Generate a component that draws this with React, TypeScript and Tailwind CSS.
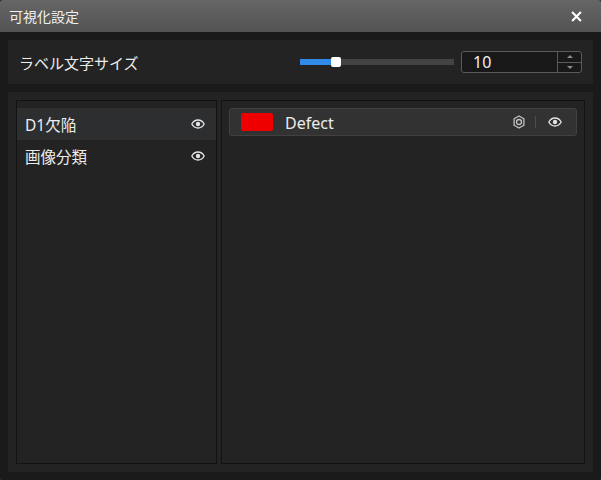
const font = { fontFamily: '"Noto Sans", "Noto Sans CJK JP", sans-serif' };

function EyeIcon({ className }: { className?: string }) {
    return (
        <svg viewBox="0 0 14 10" className={className} fill="none">
            <path
                d="M0.8 5C2.2 2.4 4.4 1 7 1s4.8 1.4 6.2 4C11.800 7.600 9.600 9 7 9S2.200 7.600 0.800 5Z"
                stroke="currentColor"
                strokeWidth="1.3"
                strokeLinejoin="round"
            />
            <circle cx="7" cy="5" r="2.200" fill="currentColor" />
        </svg>
    );
}

function HexIcon({ className }: { className?: string }) {
    return (
        <svg viewBox="0 0 12 14" className={className} fill="none" stroke="currentColor" strokeWidth="1.300">
            <path d="M6 1l4.900 2.800v6.400L6 13l-4.900-2.800V3.800L6 1Z" strokeLinejoin="round" />
            <circle cx="6" cy="7" r="2.500" />
        </svg>
    );
}

function GroupRow({ label, active }: { label: string; active?: boolean }) {
    return (
        <div className={`flex h-8 items-center justify-between pl-2 pr-[11px] ${active ? 'bg-[#2d2e30]' : ''}`}>
            <span className="pt-[4px] text-[15.500px] text-[#ececec]">{label}</span>
            <EyeIcon className="h-[10px] w-[14px] text-[#e2e2e2]" />
        </div>
    );
}

export default function App() {
    return (
        <div className="h-[480px] w-[601px] bg-[#2e2e2e]">
            <div style={font} className="flex h-[480px] w-[601px] flex-col overflow-hidden rounded-[3px] bg-[#1a1a1a]">
                <div className="flex h-8 shrink-0 items-center justify-between bg-gradient-to-b from-[#666666] to-[#535353] pl-[9px] pr-[19px]">
                    <span className="text-[14px] text-[#f0f0f0]">可視化設定</span>
                    <svg viewBox="0 0 10 10" className="h-[11px] w-[11px] text-white" fill="none" stroke="currentColor" strokeWidth="1.900">
                        <path d="M1 1l8 8M9 1l-8 8" />
                    </svg>
                </div>

                <div className="flex flex-1 flex-col gap-2 p-2">
                    <div className="flex h-11 shrink-0 items-center justify-between bg-[#232323] px-[11px]">
                        <span className="pt-[2px] text-[15px] text-[#ececec]">ラベル文字サイズ</span>
                        <div className="flex items-center gap-[7px]">
                            <div className="relative h-[6px] w-[154px] bg-[#434343]">
                                <div className="h-full w-[36px] bg-[#2f8ae8]" />
                                <div className="absolute left-[31px] top-[-2px] h-[10px] w-[10px] rounded-[2px] bg-white" />
                            </div>
                            <div className="flex h-[22px] w-[121px] rounded-[3px] border border-[#5a5a5a] bg-[#181818]">
                                <div className="flex flex-1 items-center pl-[11px] text-[16px] text-[#f0f0f0]">10</div>
                                <div className="flex w-[24px] flex-col border-l border-[#5a5a5a]">
                                    <div className="flex flex-1 items-center justify-center border-b border-[#5a5a5a]">
                                        <div className="h-0 w-0 border-x-[3px] border-b-[3px] border-x-transparent border-b-[#8a8a8a]" />
                                    </div>
                                    <div className="flex flex-1 items-center justify-center">
                                        <div className="h-0 w-0 border-x-[3px] border-t-[3px] border-x-transparent border-t-[#8a8a8a]" />
                                    </div>
                                </div>
                            </div>
                        </div>
                    </div>

                    <div className="flex flex-1 gap-1 bg-[#232323] p-2">
                        <div className="w-[201px] border border-[#121212] pt-[7px]">
                            <GroupRow label="D1欠陥" active />
                            <GroupRow label="画像分類" />
                        </div>
                        <div className="flex-1 border border-[#121212] p-[7px]">
                            <div className="flex h-7 items-center rounded-[3px] border border-[#414141] bg-[#323232] pl-[11px] pr-[14px]">
                                <div className="h-[18px] w-[32px] rounded-[2px] bg-[#ee0000]" />
                                <span className="ml-[12px] pt-px text-[16px] text-[#ececec]">Defect</span>
                                <HexIcon className="ml-auto h-[14px] w-[12px] text-[#c4c4c4]" />
                                <div className="ml-[10px] mr-[12px] h-3 w-px bg-[#4d4d4d]" />
                                <EyeIcon className="h-[10px] w-[14px] text-[#e2e2e2]" />
                            </div>
                        </div>
                    </div>
                </div>
            </div>
        </div>
    );
}
